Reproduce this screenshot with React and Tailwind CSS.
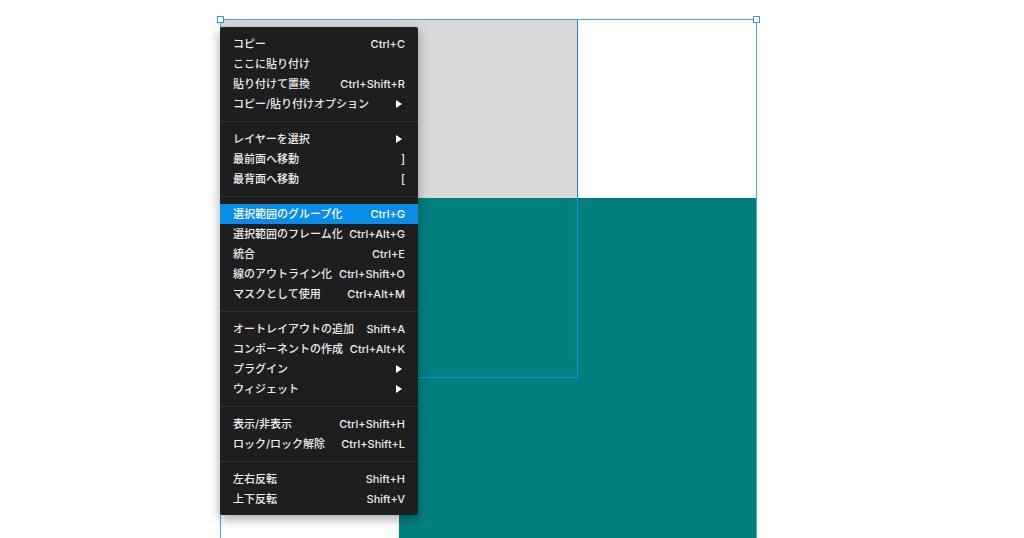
import React from 'react';

const grupos = [
  [
    { label: 'コピー', key: 'Ctrl+C' },
    { label: 'ここに貼り付け' },
    { label: '貼り付けて置換', key: 'Ctrl+Shift+R' },
    { label: 'コピー/貼り付けオプション', sub: true },
  ],
  [
    { label: 'レイヤーを選択', sub: true },
    { label: '最前面へ移動', key: ']' },
    { label: '最背面へ移動', key: '[' },
  ],
  [
    { label: '選択範囲のグループ化', key: 'Ctrl+G', active: true },
    { label: '選択範囲のフレーム化', key: 'Ctrl+Alt+G' },
    { label: '統合', key: 'Ctrl+E' },
    { label: '線のアウトライン化', key: 'Ctrl+Shift+O' },
    { label: 'マスクとして使用', key: 'Ctrl+Alt+M' },
  ],
  [
    { label: 'オートレイアウトの追加', key: 'Shift+A' },
    { label: 'コンポーネントの作成', key: 'Ctrl+Alt+K' },
    { label: 'プラグイン', sub: true },
    { label: 'ウィジェット', sub: true },
  ],
  [
    { label: '表示/非表示', key: 'Ctrl+Shift+H' },
    { label: 'ロック/ロック解除', key: 'Ctrl+Shift+L' },
  ],
  [
    { label: '左右反転', key: 'Shift+H' },
    { label: '上下反転', key: 'Shift+V' },
  ],
];

function Item({ item }) {
  return (
    <div
      className={
        'flex h-[20px] items-center justify-between px-[13px] ' +
        (item.active ? 'bg-[#0c8ce9] text-white' : 'text-[#ececec]')
      }
    >
      <span>{item.label}</span>
      {item.key && <span>{item.key}</span>}
      {item.sub && (
        <svg width="6" height="8" viewBox="0 0 6 8" className="mr-[3px]">
          <path d="M0 0 L6 4 L0 8 Z" fill="#ffffff" />
        </svg>
      )}
    </div>
  );
}

export default function App() {
  return (
    <div className="relative h-[538px] w-[1024px] overflow-hidden bg-white">
      {/* lienzo */}
      <div className="absolute left-[221px] top-[20px] h-[178px] w-[357px] bg-[#d9d9d9]" />
      <div className="absolute left-[399px] top-[198px] h-[340px] w-[357px] bg-[#007f7f]" />

      {/* contorno del elemento hover */}
      <div className="absolute left-[220px] top-[19px] h-[359px] w-[358px] border border-[#0d8ef0]" />

      {/* selección */}
      <div className="absolute left-[220px] top-[19px] h-[540px] w-[537px] border border-[#4aa8f2]" />
      <div className="absolute left-[217px] top-[16px] h-[7px] w-[7px] border border-[#2f9bf0] bg-white" />
      <div className="absolute left-[753px] top-[16px] h-[7px] w-[7px] border border-[#2f9bf0] bg-white" />

      {/* menú contextual */}
      <div
        className="absolute left-[220px] top-[27px] w-[198px] rounded-[2px] bg-[#1e1e1e] pt-[7px] pb-[6px] text-[11px] font-medium shadow-[0_4px_12px_rgba(0,0,0,0.35)]"
        style={{ fontFamily: '"Inter", "Noto Sans CJK JP", sans-serif' }}
      >
        {grupos.map((grupo, i) => (
          <div key={i}>
            {i > 0 && (
              <div className="flex h-[15px] items-center">
                <div className="h-px w-full bg-[#2e2e2e]" />
              </div>
            )}
            {grupo.map((item) => (
              <Item key={item.label} item={item} />
            ))}
          </div>
        ))}
      </div>
    </div>
  );
}
